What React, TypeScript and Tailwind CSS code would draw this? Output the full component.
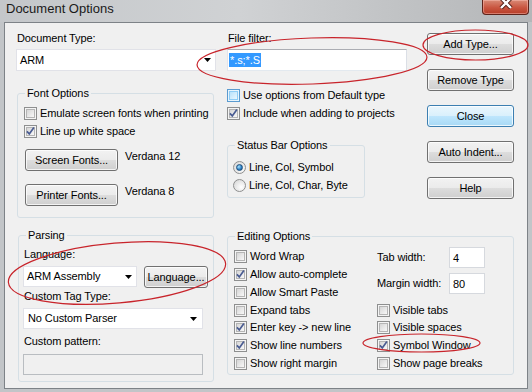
import React from 'react';

interface CheckProps {
  checked?: boolean;
  hot?: boolean;
}

const Check: React.FC<CheckProps> = ({ checked = false, hot = false }) => (
  <span
    className={`flex h-[13px] w-[13px] shrink-0 items-center justify-center border ${
      hot ? 'border-[#5b9bd0] bg-[#e8f5fd]' : 'border-[#8e8f8f] bg-[#f4f4f4]'
    }`}
  >
    <span
      className={`flex h-[9px] w-[9px] items-center justify-center border ${
        hot
          ? 'border-[#8fcdf6] bg-[linear-gradient(135deg,#b9e2fb,#eaf7fe)]'
          : 'border-[#b5b5b5] bg-[linear-gradient(135deg,#d6d6d6,#f8f8f8)]'
      }`}
    >
      {checked && (
        <svg width="9" height="9" viewBox="0 0 9 9" className="shrink-0 overflow-visible">
          <path d="M0.9 4.3 L3.3 6.9 L7.9 0.5" fill="none" stroke="#4a5c92" strokeWidth="1.7" />
        </svg>
      )}
    </span>
  </span>
);

const CheckRow: React.FC<CheckProps & { label: string; className?: string }> = ({
  label,
  checked,
  hot,
  className = '',
}) => (
  <div className={`flex items-center gap-[3px] ${className}`}>
    <Check checked={checked} hot={hot} />
    <span className="whitespace-nowrap">{label}</span>
  </div>
);

const RadioRow: React.FC<{ label: string; checked?: boolean }> = ({ label, checked = false }) => (
  <div className="flex h-[18px] items-center gap-[3px]">
    <span className="flex h-[13px] w-[13px] shrink-0 items-center justify-center rounded-full border border-[#8e8f8f] bg-[radial-gradient(circle_at_65%_65%,#ffffff,#d2d2d2)]">
      {checked && (
        <span className="h-[7px] w-[7px] rounded-full border border-[#1d4f7c] bg-[radial-gradient(circle_at_35%_35%,#a6e4ff,#2b7cc2_60%,#184b79)]" />
      )}
    </span>
    <span className="whitespace-nowrap">{label}</span>
  </div>
);

const Btn: React.FC<{ children: React.ReactNode; className?: string; primary?: boolean }> = ({
  children,
  className = '',
  primary = false,
}) => (
  <div
    className={`flex h-[22px] shrink-0 items-center justify-center rounded-[3px] border shadow-[inset_0_0_0_1px_rgba(255,255,255,0.75)] ${
      primary
        ? 'border-[#3c7fb1] bg-[linear-gradient(#eaf6fd,#d9f0fc_50%,#bee6fd_51%,#a7d9f5)]'
        : 'border-[#707070] bg-[linear-gradient(#f2f2f2,#ebebeb_50%,#dddddd_51%,#cfcfcf)]'
    } ${className}`}
  >
    {children}
  </div>
);

const Arrow = () => (
  <svg width="7" height="4" viewBox="0 0 7 4" className="shrink-0">
    <path d="M0 0h7L3.5 4z" fill="#000" />
  </svg>
);

const Combo: React.FC<{ value: string; className?: string }> = ({ value, className = '' }) => (
  <div className={`flex items-center border border-[#e1e2e8] bg-white pl-[2px] pr-[4px] ${className}`}>
    <span className="flex-1 whitespace-nowrap">{value}</span>
    <Arrow />
  </div>
);

const SmallInput: React.FC<{ value: string }> = ({ value }) => (
  <div className="flex h-[21px] w-[36px] items-center border border-[#d6d9de] bg-white pl-[3px] pt-[2px]">
    {value}
  </div>
);

const groupCls = 'rounded-[3px] border border-[#d5dfe5]';

export default function App() {
  return (
    <div className="relative h-[392px] w-[532px] overflow-hidden bg-[#c2c5c8] font-['Liberation_Sans',Arial,sans-serif] text-[11px] leading-[13px] tracking-[-0.1px] text-black">
      {/* title bar */}
      <div className="flex h-[22px] items-start bg-[linear-gradient(90deg,#c4c7ca,#d0d2d4_45%,#b4b6b8)]">
        <span className="pl-[6px] pt-[1px] text-[13px] leading-[16px] tracking-normal text-[#1a1a1a]">
          Document Options
        </span>
        <div className="ml-auto mr-[3px] flex h-[15px] w-[47px] items-start justify-center overflow-hidden rounded-b-[4px] border border-t-0 border-[#5e231a] bg-[linear-gradient(#d98a76,#c95540_55%,#b63d27)] shadow-[inset_0_0_0_1px_rgba(255,200,190,0.45)]">
          <svg width="16" height="11" viewBox="0 0 16 11" className="-mt-[2px]">
            <path d="M3 0 L13 10 M13 0 L3 10" stroke="#4b1a12" strokeWidth="4.2" />
            <path d="M3 0 L13 10 M13 0 L3 10" stroke="#ffffff" strokeWidth="2.4" />
          </svg>
        </div>
      </div>

      {/* client area */}
      <div className="mx-[4px] h-[367px] border border-[#7d8287] bg-[#f0f0f0] pl-[11px] pt-[9px]">
        <div className="flex h-[197px]">
          {/* left column */}
          <div className="flex w-[201px] flex-col">
            <span className="ml-[1px]">Document Type:</span>
            <Combo value="ARM" className="mt-[4px] h-[22px] w-[200px] pl-[3px]" />
            <fieldset className={`ml-[1px] mt-[16px] h-[131px] w-[197px] ${groupCls}`}>
              <legend className="ml-[7px] px-[2px]">Font Options</legend>
              <div className="flex flex-col pl-[6px] pt-[4px]">
                <CheckRow className="h-[18px]" label="Emulate screen fonts when printing" />
                <CheckRow className="h-[18px]" label="Line up white space" checked />
                <div className="mt-[9px] flex items-start">
                  <Btn className="ml-[1px] w-[93px]">Screen Fonts...</Btn>
                  <span className="ml-[7px] pt-[1px]">Verdana 12</span>
                </div>
                <div className="mt-[13px] flex items-start">
                  <Btn className="ml-[1px] w-[93px]">Printer Fonts...</Btn>
                  <span className="ml-[7px] pt-[1px]">Verdana 8</span>
                </div>
              </div>
            </fieldset>
          </div>

          {/* middle column */}
          <div className="ml-[10px] flex w-[180px] flex-col">
            <span className="ml-[1px]">File filter:</span>
            <div className="mt-[4px] flex h-[22px] items-center border border-[#abadb3] border-b-[#e3e9ef] border-l-[#e2e3ea] border-r-[#dbdfe6] bg-white pl-[1px]">
              <span className="bg-[#3399ff] px-[1px] leading-[14px] text-white">*.s;*.S</span>
            </div>
            <CheckRow className="mt-[15px] h-[18px]" hot label="Use options from Default type" />
            <CheckRow className="h-[18px]" checked label="Include when adding to projects" />
            <fieldset className={`mt-[17px] h-[59px] w-[138px] ${groupCls}`}>
              <legend className="ml-[7px] px-[2px]">Status Bar Options</legend>
              <div className="flex flex-col pl-[5px] pt-[6px]">
                <RadioRow checked label="Line, Col, Symbol" />
                <RadioRow label="Line, Col, Char, Byte" />
              </div>
            </fieldset>
          </div>

          {/* buttons */}
          <div className="ml-[20px] flex w-[87px] flex-col gap-[14px] pt-[1px]">
            <Btn>Add Type...</Btn>
            <Btn>Remove Type</Btn>
            <Btn primary>Close</Btn>
            <Btn>Auto Indent...</Btn>
            <Btn>Help</Btn>
          </div>
        </div>

        <div className="flex items-start">
          <fieldset className={`ml-[2px] h-[153px] w-[196px] ${groupCls}`}>
            <legend className="ml-[7px] px-[2px]">Parsing</legend>
            <div className="flex flex-col pl-[4px] pt-[6px]">
              <span className="ml-[1px]">Language:</span>
              <div className="mt-[5px] flex items-start">
                <Combo className="h-[21px] w-[114px] pl-[3px]" value="ARM Assembly" />
                <Btn className="ml-[7px] w-[64px]">Language...</Btn>
              </div>
              <span className="ml-[1px] mt-[2px]">Custom Tag Type:</span>
              <Combo className="mt-[5px] h-[21px] w-[180px] pl-[4px] pr-[5px]" value="No Custom Parser" />
              <span className="ml-[1px] mt-[6px]">Custom pattern:</span>
              <div className="mt-[6px] h-[21px] w-[180px] border border-[#b9bdc1] bg-[#f0f0f0]" />
            </div>
          </fieldset>

          <fieldset className={`ml-[13px] mt-[1px] h-[145px] w-[287px] ${groupCls}`}>
            <legend className="ml-[7px] px-[2px]">Editing Options</legend>
            <div className="flex pl-[6px] pt-[5px]">
              <div className="flex w-[143px] flex-col">
                <CheckRow className="h-[17.75px]" label="Word Wrap" />
                <CheckRow className="h-[17.75px]" checked label="Allow auto-complete" />
                <CheckRow className="h-[17.75px]" label="Allow Smart Paste" />
                <CheckRow className="h-[17.75px]" label="Expand tabs" />
                <CheckRow className="h-[17.75px]" checked label="Enter key -> new line" />
                <CheckRow className="h-[17.75px]" checked label="Show line numbers" />
                <CheckRow className="h-[17.75px]" label="Show right margin" />
              </div>
              <div className="flex flex-col">
                <div className="flex h-[53.25px] flex-col">
                  <div className="-mt-[1px] flex h-[21px] items-center">
                    <span className="w-[72px]">Tab width:</span>
                    <SmallInput value="4" />
                  </div>
                  <div className="mt-[5px] flex h-[21px] items-center">
                    <span className="w-[72px]">Margin width:</span>
                    <SmallInput value="80" />
                  </div>
                </div>
                <CheckRow className="h-[17.75px]" label="Visible tabs" />
                <CheckRow className="h-[17.75px]" label="Visible spaces" />
                <CheckRow className="h-[17.75px]" checked label="Symbol Window" />
                <CheckRow className="h-[17.75px]" label="Show page breaks" />
              </div>
            </div>
          </fieldset>
        </div>
      </div>

      {/* red annotation rings */}
      <svg className="pointer-events-none absolute left-0 top-0" width="532" height="392">
        <g fill="none" stroke="#c8242b" strokeWidth="1.2">
          <ellipse cx="312" cy="61" rx="115" ry="23" transform="rotate(-2 312 61)" />
          <ellipse cx="475.5" cy="45" rx="52.5" ry="15" />
          <ellipse cx="117" cy="273" rx="109" ry="30" transform="rotate(-5 117 273)" />
          <ellipse cx="421.5" cy="343" rx="58.5" ry="9" />
        </g>
      </svg>
    </div>
  );
}
